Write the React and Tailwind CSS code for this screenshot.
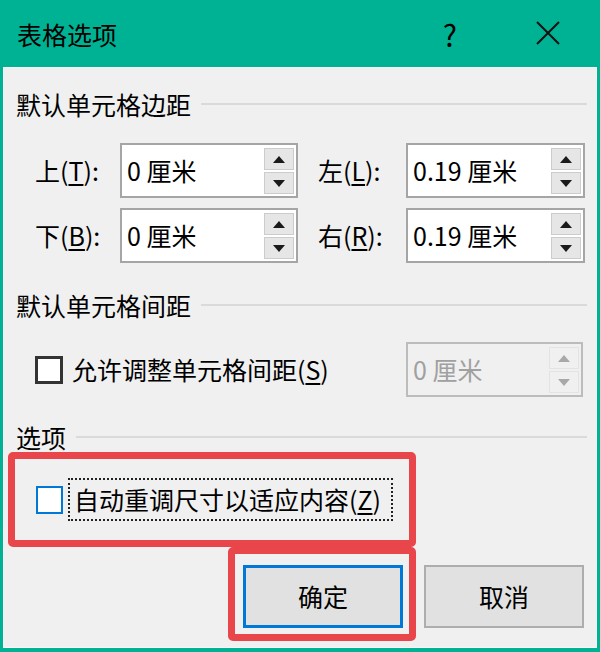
import React from "react";

function Arrow({ up, disabled }) {
  return (
    <svg width="12" height="7" viewBox="0 0 12 7" className="block">
      {up ? (
        <polygon points="0,7 12,7 6,0" fill={disabled ? "#a8a8a8" : "#1a1a1a"} />
      ) : (
        <polygon points="0,0 12,0 6,7" fill={disabled ? "#a8a8a8" : "#1a1a1a"} />
      )}
    </svg>
  );
}

function Spin({ value, disabled, width }) {
  return (
    <div
      className={
        "flex h-[55px] items-stretch border-2 " +
        width +
        (disabled ? " border-[#bcbcbc] bg-[#f0f0f0]" : " border-[#a5a5a5] bg-white")
      }
    >
      <div
        className={
          "flex flex-1 items-center pl-[5px] text-[25px] leading-none " +
          (disabled ? "text-[#a0a0a0]" : "text-black")
        }
      >
        {value}
      </div>
      <div className="flex flex-col gap-[2px] pr-[2px] pt-[3px]">
        <div
          className={
            "flex h-[22px] w-[30px] items-center justify-center border " +
            (disabled ? "border-[#e3e3e3] bg-[#f0f0f0]" : "border-[#cccccc] bg-[#e6e6e6]")
          }
        >
          <Arrow up disabled={disabled} />
        </div>
        <div
          className={
            "flex h-[22px] w-[30px] items-center justify-center border " +
            (disabled ? "border-[#e3e3e3] bg-[#f0f0f0]" : "border-[#cccccc] bg-[#e6e6e6]")
          }
        >
          <Arrow disabled={disabled} />
        </div>
      </div>
    </div>
  );
}

function Header({ children, className }) {
  return (
    <div className={"flex h-[30px] items-center pl-[12px] pr-[9px] " + className}>
      <span className="text-[25px] leading-none text-black">{children}</span>
      <div className="ml-[10px] h-[2px] flex-1 bg-[#dadada]" />
    </div>
  );
}

function Label({ char, k, className }) {
  return (
    <div className={"text-[25px] leading-none text-black " + className}>
      {char}(<span className="underline underline-offset-[3px]">{k}</span>):
    </div>
  );
}

export default function App() {
  return (
    <div className="flex h-[652px] w-[600px] flex-col bg-[#00b294] font-['Microsoft_YaHei','Noto_Sans_CJK_SC',sans-serif]">
      <div className="flex h-[67px] items-center pl-[17px] pt-[2px]">
        <span className="text-[25px] leading-none text-black">表格选项</span>
        <span className="ml-auto mb-[2px] text-[30px] leading-none text-black">?</span>
        <svg width="24" height="24" viewBox="0 0 24 24" className="ml-[79px] mr-[40px] mb-[4px]">
          <path d="M1 1 L23 23 M23 1 L1 23" stroke="#111" strokeWidth="2" />
        </svg>
      </div>
      <div className="mx-[3px] mb-[4px] flex flex-1 flex-col border border-[#f8f8f8] bg-[#f0f0f0] pt-[21px]">
        <Header>默认单元格边距</Header>

        <div className="mt-[24px] flex items-center pl-[31px]">
          <Label char="上" k="T" className="w-[85px]" />
          <Spin value="0 厘米" width="w-[178px]" />
          <Label char="左" k="L" className="ml-[20px] w-[88px]" />
          <Spin value="0.19 厘米" width="w-[179px]" />
        </div>
        <div className="mt-[10px] flex items-center pl-[31px]">
          <Label char="下" k="B" className="w-[85px]" />
          <Spin value="0 厘米" width="w-[178px]" />
          <Label char="右" k="R" className="ml-[20px] w-[88px]" />
          <Spin value="0.19 厘米" width="w-[179px]" />
        </div>

        <Header className="mt-[27px]">默认单元格间距</Header>

        <div className="mt-[22px] flex items-center pl-[31px]">
          <div className="h-[28px] w-[28px] border-[3px] border-[#333333] bg-white" />
          <div className="ml-[9px] text-[25px] leading-none text-black">
            允许调整单元格间距(<span className="underline underline-offset-[3px]">S</span>)
          </div>
          <div className="ml-auto mr-[13px]">
            <Spin value="0 厘米" disabled width="w-[177px]" />
          </div>
        </div>

        <Header className="mt-[25px]">选项</Header>

        <div className="ml-[4px] flex h-[95px] w-[408px] items-center rounded-[5px] border-[7px] border-[#e8464b] pl-[21px]">
          <div className="h-[28px] w-[27px] border-2 border-[#0078d7] bg-white" />
          <div className="ml-[5px] flex h-[43px] w-[325px] items-center border-2 border-dotted border-[#222] pl-[4px] text-[25px] leading-none text-black">
            自动重调尺寸以适应内容(<span className="underline underline-offset-[3px]">Z</span>)
          </div>
        </div>

        <div className="flex items-start">
          <div className="ml-[224px] h-[94px] w-[188px] rounded-[5px] border-[7px] border-[#e8464b] pl-[8px] pt-[11px]">
            <div className="flex h-[63px] w-[160px] items-center justify-center border-[3px] border-[#0078d7] bg-[#e1e1e1] text-[25px] leading-none text-black">
              确定
            </div>
          </div>
          <div className="ml-[8px] mt-[18px] flex h-[63px] w-[160px] items-center justify-center border-2 border-[#adadad] bg-[#e1e1e1] text-[25px] leading-none text-black">
            取消
          </div>
        </div>
      </div>
    </div>
  );
}
